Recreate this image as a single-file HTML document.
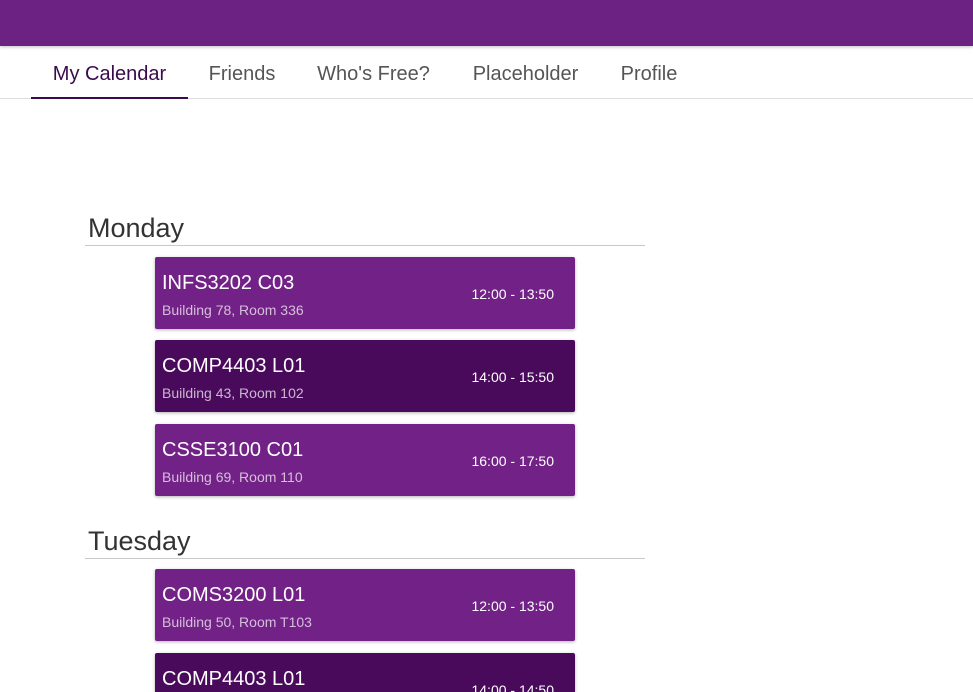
<!DOCTYPE html>
<html><head><style>
html,body{margin:0;width:973px;height:692px;overflow:hidden;background:#fff;font-family:"Liberation Sans",sans-serif;position:relative}
.top{position:absolute;left:0;top:0;width:973px;height:46px;background:#6b2283;box-shadow:0 1px 3px rgba(0,0,0,.25)}
.tabs{position:absolute;top:46px;left:0;width:973px;height:52px;border-bottom:1px solid #ddd}
.tab{position:absolute;top:0;height:52px;line-height:56px;font-size:20px;color:#555;text-align:center}
.tab.a{color:#3a0b4c;border-bottom:2px solid #3a0b4c;height:51px}
.day{position:absolute;left:88px;font-size:27px;font-weight:300;color:#333}
.line{position:absolute;left:85px;width:560px;height:1px;background:#c8c8c8}
.card{position:absolute;left:155px;width:420px;height:72px;border-radius:2px;box-shadow:0 1px 3px rgba(0,0,0,.3);color:#fff}
.l{background:#722286}.d{background:#4a0a5c}
.t{position:absolute;left:7px;top:15px;font-size:20px}
.s{position:absolute;left:7px;top:45px;font-size:14px;color:rgba(255,255,255,.7)}
.tm{position:absolute;right:21px;top:29px;font-size:14px}
</style></head><body>
<div class="top"></div>
<div class="tabs">
<div class="tab a" style="left:31px;width:157px">My Calendar</div>
<div class="tab" style="left:188px;width:108px">Friends</div>
<div class="tab" style="left:296px;width:155px">Who's Free?</div>
<div class="tab" style="left:451px;width:149px">Placeholder</div>
<div class="tab" style="left:600px;width:98px">Profile</div>
</div>
<div class="day" style="top:213px">Monday</div>
<div class="line" style="top:245px"></div>
<div class="card l" style="top:257px"><div class="t">INFS3202 C03</div><div class="s">Building 78, Room 336</div><div class="tm">12:00 - 13:50</div></div>
<div class="card d" style="top:340px"><div class="t">COMP4403 L01</div><div class="s">Building 43, Room 102</div><div class="tm">14:00 - 15:50</div></div>
<div class="card l" style="top:424px"><div class="t">CSSE3100 C01</div><div class="s">Building 69, Room 110</div><div class="tm">16:00 - 17:50</div></div>
<div class="day" style="top:526px">Tuesday</div>
<div class="line" style="top:558px"></div>
<div class="card l" style="top:569px"><div class="t">COMS3200 L01</div><div class="s">Building 50, Room T103</div><div class="tm">12:00 - 13:50</div></div>
<div class="card d" style="top:653px"><div class="t">COMP4403 L01</div><div class="s">Building 43, Room 102</div><div class="tm">14:00 - 14:50</div></div>
</body></html>
